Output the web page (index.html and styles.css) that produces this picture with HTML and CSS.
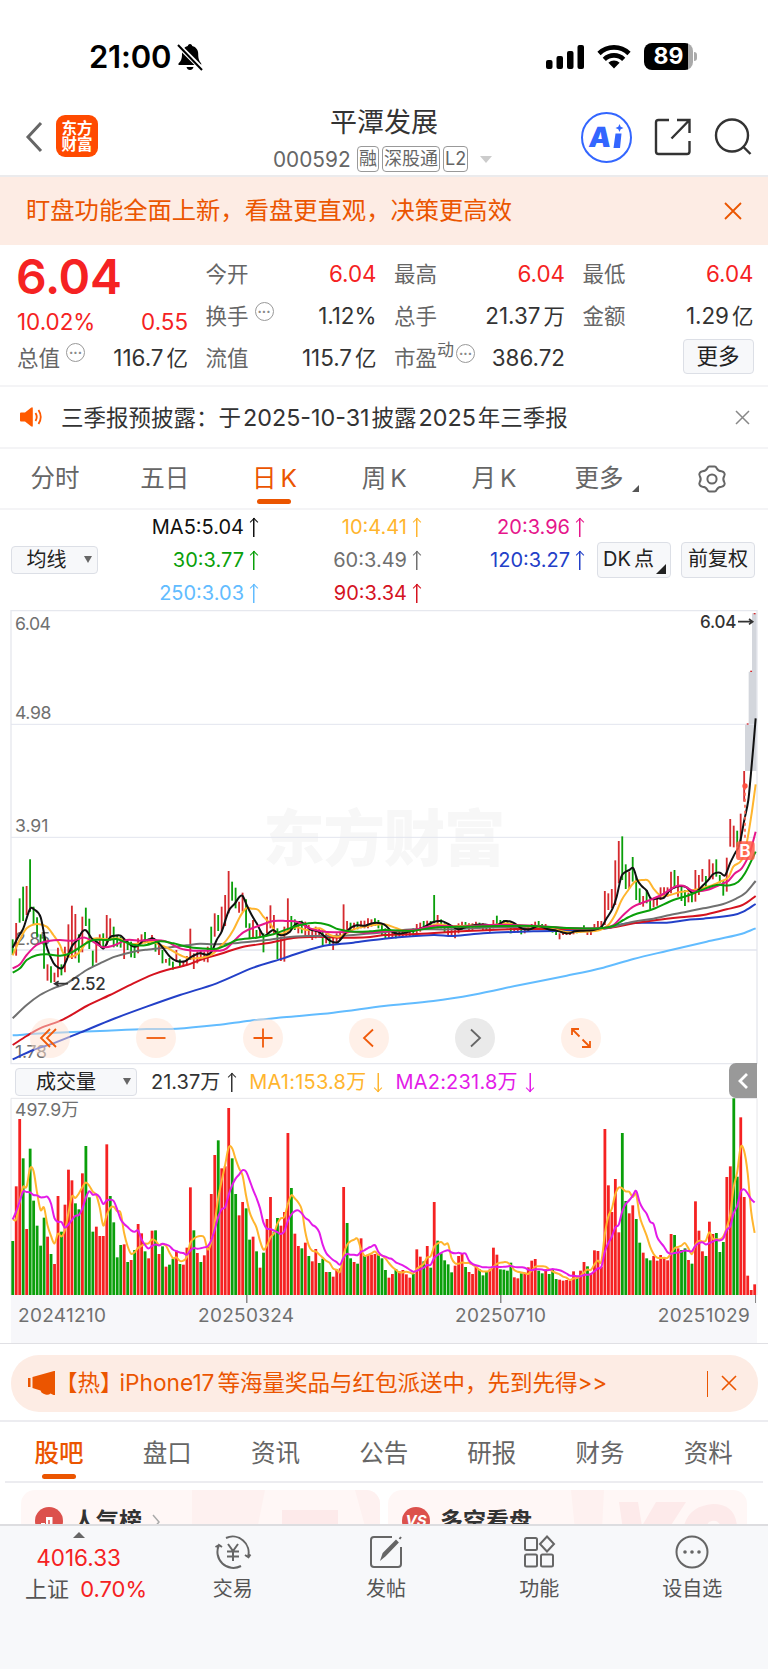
FILE: index.html
```html
<!DOCTYPE html>
<html lang="zh-CN">
<head>
  <meta charset="utf-8">
  <title>平潭发展 000592</title>
  <meta name="viewport" content="width=device-width, initial-scale=1">
  <link rel="stylesheet" href="styles.css">
</head>
<body>
  <div class="statusbar">
    <span class="time">21:00</span>
    <svg class="bell" width="26" height="28" viewBox="0 0 26 28">
      <path d="M13 1c1.500 0 2 1 2.200 2 4 1 6 4 6 8 0 5 1 7 3 9.500v1.500H1.500v-1.500C4 18 5 16 5 11c0-4 2-7 5.800-8 .2-1 .7-2 2.200-2zM9.500 24h7c-.5 2-1.700 3-3.500 3s-3-1-3.500-3z"/>
      <path d="M0 1l25 25" stroke="#fff" stroke-width="5"/>
      <path d="M1 2l24 25" stroke="#000" stroke-width="2"/>
    </svg>
    <div class="status-right">
      <svg width="39" height="24" viewBox="0 0 39 24">
        <rect x="0" y="15" width="6.500" height="9" rx="2"/>
        <rect x="10.500" y="11" width="6.500" height="13" rx="2"/>
        <rect x="21" y="6" width="6.500" height="18" rx="2"/>
        <rect x="31.500" y="0" width="6.500" height="24" rx="2"/>
      </svg>
      <svg class="wifi" width="34" height="25" viewBox="0 0 34 25">
        <g fill="none" stroke="#000" stroke-width="4.600">
          <path d="M2 9.500a21.500 21.500 0 0 1 30 0"/>
          <path d="M7.300 15.300a14 14 0 0 1 19.400 0"/>
        </g>
        <path d="M17 24.500l-5.600-5.800a8.200 8.200 0 0 1 11.200 0z"/>
      </svg>
      <div class="battery"><span>89</span></div>
      <i class="nub"></i>
    </div>
  </div>

  <div class="header">
    <div class="header-left">
      <svg width="18" height="32" viewBox="0 0 18 32"><path d="M16 2L3 16l13 14" fill="none" stroke="#666" stroke-width="3"/></svg>
      <div class="logo">东方<br>财富</div>
    </div>
    <div class="title">
      <h1>平潭发展</h1>
      <div class="code">
        <span class="num">000592</span><span class="tag">融</span><span class="tag">深股通</span><span class="tag">L2</span><i class="caret"></i>
      </div>
    </div>
    <div class="header-right">
      <div class="ai"><span>A</span><svg width="12" height="26" viewBox="0 0 12 26"><path d="M7.500 0l1.200 2.800L11.500 4 8.700 5.200 7.500 8 6.300 5.200 3.500 4l2.800-1.200zM3.500 9.500h6L8 24H1.500z" fill="#36f"/></svg></div>
      <svg class="share" width="38" height="38" viewBox="0 0 38 38" fill="none" stroke="#333" stroke-width="2.400">
        <path d="M15 2H4.500Q2 2 2 4.500v29Q2 36 4.500 36h28.500q2.500 0 2.500-2.500V23M23 2h12.500v13M35 2.500L17.500 20.500"/>
      </svg>
      <svg width="38" height="38" viewBox="0 0 38 38" fill="none" stroke="#333" stroke-width="2.400">
        <circle cx="18" cy="17.500" r="16"/><path d="M29 28.500l7.500 7.500"/>
      </svg>
    </div>
  </div>

  <div class="banner">
    <span>盯盘功能全面上新，看盘更直观，决策更高效</span>
    <svg width="18" height="18" viewBox="0 0 18 18"><path d="M1 1l16 16M17 1L1 17" stroke="#eb5500" stroke-width="1.800"/></svg>
  </div>

  <div class="quote">
    <div class="quote-col first">
      <div class="price">6.04</div>
      <div class="row red"><span>10.02%</span><span>0.55</span></div>
      <div class="row last"><label>总值<i class="dots">···</i></label><span>116.7<b>亿</b></span></div>
    </div>
    <div class="quote-col">
      <div class="row red"><label>今开</label><span>6.04</span></div>
      <div class="row"><label>换手<i class="dots">···</i></label><span>1.12%</span></div>
      <div class="row"><label>流值</label><span>115.7<b>亿</b></span></div>
    </div>
    <div class="quote-col">
      <div class="row red"><label>最高</label><span>6.04</span></div>
      <div class="row"><label>总手</label><span>21.37<b>万</b></span></div>
      <div class="row"><label>市盈<sup>动</sup><i class="dots">···</i></label><span>386.72</span></div>
    </div>
    <div class="quote-col">
      <div class="row red"><label>最低</label><span>6.04</span></div>
      <div class="row"><label>金额</label><span>1.29<b>亿</b></span></div>
      <div class="row end"><a class="btn more">更多</a></div>
    </div>
  </div>

  <div class="notice">
    <svg width="24" height="20" viewBox="0 0 24 20">
      <path d="M1 6.500Q1 5.500 2 5.500h4L12 .8q1.800-1.200 1.800.8v16.800q0 2-1.800.8L6 14.500H2q-1 0-1-1z" fill="#ff5a00"/>
      <path d="M16.500 6q2.500 4 0 8M19.500 3q4.500 7 0 14" fill="none" stroke="#ff5a00" stroke-width="1.800"/>
    </svg>
    <span>三季报预披露：于<em>2025-10-31</em>披露<em>2025</em>年三季报</span>
    <svg class="close" width="15" height="15" viewBox="0 0 15 15"><path d="M1 1l13 13M14 1L1 14" stroke="#888" stroke-width="1.500"/></svg>
  </div>

  <div class="period">
    <span>分时</span>
    <span>五日</span>
    <span class="active">日<em>K</em></span>
    <span>周<em>K</em></span>
    <span>月<em>K</em></span>
    <span class="has-more">更多</span>
    <span class="gear"><svg width="30" height="28" viewBox="0 0 30 28" fill="none" stroke="#666" stroke-width="2">
      <path d="M10.500 3Q11 1.500 12.500 1.500h5Q19 1.500 19.500 3q1.500 3 5 3.200 2 .3 2.800 1.800.8 1.300 0 2.700-2 3.300 0 6.600.8 1.400 0 2.700-.8 1.500-2.800 1.800-3.500.2-5 3.200-.5 1.500-2 1.500h-5q-1.500 0-2-1.500-1.500-3-5-3.200-2-.3-2.800-1.800-.8-1.300 0-2.700 2-3.300 0-6.600-.8-1.400 0-2.700.8-1.500 2.800-1.800 3.500-.2 5-3.200z"/>
      <circle cx="15" cy="14" r="4.600"/>
    </svg></span>
  </div>

  <div class="ma">
    <a class="btn select">均线</a>
    <div class="ma-grid">
      <span class="c-5">MA5:5.04<i class="up"></i></span>
      <span class="c-10">10:4.41<i class="up"></i></span>
      <span class="c-20">20:3.96<i class="up"></i></span>
      <span class="c-30">30:3.77<i class="up"></i></span>
      <span class="c-60">60:3.49<i class="up"></i></span>
      <span class="c-120">120:3.27<i class="up"></i></span>
      <span class="c-250">250:3.03<i class="up"></i></span>
      <span class="c-90">90:3.34<i class="up"></i></span>
    </div>
    <a class="btn dk">DK<b>点</b></a>
    <a class="btn fq">前复权</a>
  </div>

  <div class="chart">
    <svg id="kline" width="768" height="457" viewBox="0 27 2304 1371"></svg>
    <div class="controls">
      <span><svg viewBox="0 0 40 40"><path d="M20 11l-9 9 9 9M26 11l-9 9 9 9"/></svg></span>
      <span><svg viewBox="0 0 40 40"><path d="M10.500 20h19"/></svg></span>
      <span><svg viewBox="0 0 40 40"><path d="M10.500 20h19M20 10.500v19"/></svg></span>
      <span><svg viewBox="0 0 40 40"><path d="M24 11.500l-9 8.500 9 8.500"/></svg></span>
      <span class="off"><svg viewBox="0 0 40 40"><path d="M16 11.500l9 8.500-9 8.500"/></svg></span>
      <span><svg viewBox="0 0 40 40"><path d="M11 17v-6h7M11.500 11.500l7 7M29 23v6h-8M28.500 28.500l-7-7"/></svg></span>
    </div>
  </div>

  <div class="vol-head">
    <a class="btn select wide">成交量</a>
    <span class="v1">21.37万<i class="up"></i></span>
    <span class="v2">MA1:153.8万<i class="up down"></i></span>
    <span class="v3">MA2:231.8万<i class="up down"></i></span>
    <a class="fold"><svg width="12" height="18" viewBox="0 0 12 18"><path d="M10 2L3 9l7 7" fill="none" stroke="#fff" stroke-width="2.800"/></svg></a>
  </div>
  <svg id="volume" width="768" height="198" viewBox="0 111 2304 594"></svg>
  <div class="dates">
    <span>20241210</span><span>20250324</span><span>20250710</span><span>20251029</span>
  </div>

  <div class="hot-wrap">
    <div class="hot">
      <svg width="28" height="24" viewBox="0 0 28 24" fill="#eb5500"><path d="M0 7h2.500v9H0zM4.500 6L26 0h1v24h-1.500l-3-1.500q-2 2-5 1l-2-.7q-2.500-1-3-3.300L4.500 17z"/></svg>
      <span>【热】<em>iPhone17</em>等海量奖品与红包派送中，先到先得&gt;&gt;</span>
      <i class="bar"></i>
      <svg width="16" height="16" viewBox="0 0 16 16"><path d="M1 1l14 14M15 1L1 15" stroke="#eb5500" stroke-width="1.600"/></svg>
    </div>
  </div>

  <div class="tabs">
    <span class="active">股吧</span><span>盘口</span><span>资讯</span><span>公告</span><span>研报</span><span>财务</span><span>资料</span>
  </div>

  <div class="cards">
    <div class="card">
      <svg class="deco" width="210" height="40" viewBox="0 0 210 40"><path d="M22 0h73l-8 40H22z" fill="#fef1f0"/><path d="M112 20h56v20h-56z" fill="#fdeaea"/><path d="M185 0h25v40h-14z" fill="#fef1f0"/></svg>
      <svg class="badge" width="28" height="28" viewBox="0 0 28 28"><circle cx="14" cy="14" r="14" fill="#dc514c"/><path d="M6 24v-8h4v8zM11 24V10h6.500v14zM19 24v-6h3.500v6z" fill="#fff"/><path d="M14 13v11" stroke="#dc514c" stroke-width="1.500"/></svg>
      <span>人气榜</span>
      <svg class="arrow" width="9" height="16" viewBox="0 0 9 16"><path d="M1 1l6 7-6 7" fill="none" stroke="#aaa" stroke-width="1.500"/></svg>
    </div>
    <div class="card">
      <svg class="deco" width="180" height="40" viewBox="0 0 180 40"><path d="M4 0h33l-2 40H8z" fill="#fef1f0"/><path d="M52 12h19l4 24 14-24h30l-18 28H56zM116 40q4-24 30-26 22 0 24 22h-16q-4-8-12-4l-6 8z" fill="#fdeaea"/></svg>
      <div class="badge vs">VS</div>
      <span>多空看盘</span>
    </div>
  </div>

  <div class="footer">
    <div class="index">
      <i class="tri"></i>
      <div class="red">4016.33</div>
      <div class="name">上证<em class="red">0.70%</em></div>
    </div>
    <div class="item">
      <svg width="38" height="34" viewBox="0 0 38 34" fill="none" stroke="#666" stroke-width="2">
        <path d="M12 3A16 16 0 0 1 34 22l-3-2M34 23l2.500-3.500M27 31A16 16 0 0 1 5 10l3 2M5 10L1.500 12M14 9l5 7 5-7M13 16.500h12M13 21.500h12M19 16v10"/>
      </svg>
      <span>交易</span>
    </div>
    <div class="item">
      <svg width="34" height="34" viewBox="0 0 34 34" fill="none" stroke="#666" stroke-width="2">
        <path d="M23 2H5Q2 2 2 5v24q0 3 3 3h24q3 0 3-3V12"/><path d="M13 23l1.500-4.500L27 6l1.500 1.500L16 20.500zM30.500 4l1.500-2" fill="#666"/>
      </svg>
      <span>发帖</span>
    </div>
    <div class="item">
      <svg width="34" height="34" viewBox="0 0 34 34" fill="none" stroke="#666" stroke-width="2">
        <rect x="3" y="3" width="12" height="12" rx="1.500"/><path d="M25 1.500L32 9l-7 7.500L18 9z"/><rect x="3" y="19.500" width="12" height="12" rx="1.500"/><rect x="19" y="19.500" width="12" height="12" rx="1.500"/>
      </svg>
      <span>功能</span>
    </div>
    <div class="item">
      <svg width="34" height="34" viewBox="0 0 34 34" fill="none" stroke="#666" stroke-width="2">
        <circle cx="17" cy="17" r="15.500"/><g fill="#666" stroke="none"><circle cx="10" cy="17" r="1.800"/><circle cx="17" cy="17" r="1.800"/><circle cx="24" cy="17" r="1.800"/></g>
      </svg>
      <span>设自选</span>
    </div>
  </div>
<script src="chart.js"></script>
</body>
</html>
```
FILE: styles.css
```css
html {
  font-family: Inter, "Noto Sans CJK SC", sans-serif;
  color: #333;
}
body {
  margin: 0;
  width: 768px;
  height: 1669px;
  overflow: hidden;
  background-color: #fff;
}
i, em {
  font-style: normal;
}
svg {
  display: block;
  flex: none;
}
.red, .red span {
  color: #f52222;
}

/* status bar */
.statusbar {
  height: 97px;
  display: flex;
  padding: 0 71px 0 89px;
  color: #000;
}
.time {
  font-size: 31px;
  font-weight: 600;
  line-height: 36px;
  margin-top: 39px;
  width: 82px;
  letter-spacing: -0.200px;
}
.bell {
  margin: 43px 0 0 6px;
}
.status-right {
  margin: 43px 0 0 auto;
  display: flex;
  height: 27px;
  align-items: center;
}
.wifi {
  margin: 0 13px 0 12px;
}
.battery {
  width: 49px;
  height: 27px;
  border-radius: 8px;
  background: linear-gradient(90deg, #000 44px, #aaa 44px);
  color: #fff;
  font-size: 23px;
  font-weight: 700;
  line-height: 27px;
  text-align: center;
}
.nub {
  width: 3px;
  height: 9px;
  margin-left: 1px;
  border-radius: 0 4px 4px 0;
  background-color: #aaa;
}

/* header */
.header {
  height: 78px;
  display: flex;
  border-bottom: 2px solid #ebebed;
}
.header-left {
  display: flex;
  width: 244px;
  padding: 18px 0 0 25px;
  align-items: flex-start;
}
.header-left svg {
  margin-top: 6px;
}
.logo {
  width: 42px;
  height: 36px;
  padding-top: 6px;
  margin-left: 13px;
  border-radius: 9px;
  background-color: #ff4a00;
  color: #fff;
  font-size: 15.500px;
  line-height: 16px;
  font-weight: 700;
  text-align: center;
}
.title {
  width: 230px;
}
h1 {
  margin: 10px 0 0;
  font-size: 27px;
  line-height: 32px;
  font-weight: 400;
  text-align: center;
}
.code {
  display: flex;
  align-items: center;
  height: 28px;
  margin-top: 6px;
  padding-left: 4px;
  color: #666;
}
.num {
  font-size: 20.800px;
  width: 80px;
  margin-right: 4px;
}
.tag {
  font-size: 18px;
  line-height: 24px;
  padding: 0 1px;
  margin-right: 3px;
  border: 1px solid #999;
  border-radius: 4px;
}
.caret {
  margin-left: 9px;
  border: 6px solid transparent;
  border-top: 7px solid #ccc;
  border-bottom: 0;
}
.header-right {
  margin-left: auto;
  display: flex;
  padding: 15px 16px 0 0;
}
.ai {
  box-sizing: border-box;
  display: flex;
  justify-content: center;
  width: 51px;
  height: 51px;
  border: 2.500px solid #36f;
  border-radius: 50%;
  color: #36f;
  font-size: 28px;
  line-height: 47px;
  font-weight: 900;
}
.ai span {
  transform: skewX(-6deg);
}
.ai svg {
  margin-top: 10px;
}
.share {
  margin: 6px 22px 0;
}
.share + svg {
  margin-top: 6px;
}

.banner {
  height: 68px;
  display: flex;
  align-items: center;
  justify-content: space-between;
  padding: 0 26px 0 26px;
  background-color: #fdece4;
  color: #eb5500;
  font-size: 24.300px;
}
.banner span {
  margin-top: -5px;
}

/* quote */
.quote {
  height: 142px;
  box-sizing: border-box;
  display: flex;
  gap: 17.500px;
  padding: 8px 15px 0 17px;
  border-bottom: 2px solid #f4f4f6;
  font-size: 21.500px;
}
.quote-col {
  width: 171px;
  flex: none;
}
.price {
  height: 48px;
  color: #f52222;
  font-size: 48px;
  line-height: 48px;
  font-weight: 600;
  letter-spacing: -0.300px;
  margin-left: -1px;
}
.row {
  display: flex;
  justify-content: space-between;
  height: 42px;
  line-height: 42px;
  white-space: nowrap;
}
.row > span {
  font-size: 22.400px;
}
.row b {
  font-size: 21.500px;
}
.row b, .dk b {
  font-weight: 400;
  margin-left: 3px;
}
.first .row {
  height: 40px;
}
.first .last {
  line-height: 34px;
}
.row label {
  display: flex;
  color: #666;
}
.row sup {
  font-size: 17px;
  line-height: 26px;
}
.dots {
  box-sizing: border-box;
  width: 19px;
  height: 19px;
  margin: 7px 0 0 6px;
  border: 1.500px solid #999;
  border-radius: 50%;
  font-size: 13px;
  line-height: 16px;
  font-weight: 700;
  color: #888;
  text-align: center;
}
.first .dots {
  margin-top: 2px;
}
.row sup + .dots {
  margin-left: 2px;
}
.end {
  justify-content: flex-end;
}
.btn {
  box-sizing: border-box;
  border: 1px solid #dcdfe6;
  border-radius: 4px;
  background-color: #f7f8fa;
  color: #222;
  text-align: center;
}
.more {
  width: 71px;
  height: 35px;
  margin-top: 2px;
  line-height: 33px;
}

.notice {
  height: 62px;
  box-sizing: border-box;
  display: flex;
  align-items: center;
  padding: 0 18px 0 19px;
  border-bottom: 2px solid #f4f4f6;
  font-size: 22.500px;
}
.notice span {
  margin: -2px 0 0 18px;
}
.notice em {
  margin: 0 2px;
  font-size: 23.300px;
}
.notice .close {
  margin-left: auto;
}

.period {
  height: 61px;
  box-sizing: border-box;
  display: flex;
  border-bottom: 2px solid #f4f4f6;
  color: #666;
  font-size: 24.500px;
  line-height: 59px;
}
.period span {
  position: relative;
  flex: none;
  width: 109.800px;
  text-align: center;
}
.period em {
  margin-left: 4px;
}
.period .has-more {
  width: 100px;
}
.has-more::after {
  content: "";
  position: absolute;
  right: 10px;
  top: 36px;
  border-left: 7px solid transparent;
  border-bottom: 7px solid #555;
}
.period .gear {
  display: flex;
  width: 119px;
  padding-right: 0;
  margin-left: 4px;
  align-items: center;
  justify-content: center;
}
.period .active, .tabs .active {
  color: #eb5500;
}
.active::after {
  content: "";
  position: absolute;
  left: 50%;
  bottom: 4px;
  width: 34px;
  height: 5px;
  margin-left: -17px;
  border-radius: 3px;
  background-color: #eb5500;
}

/* moving averages */
.ma {
  height: 98px;
  display: flex;
  align-items: center;
  padding: 1px 13px 0 11px;
  font-size: 20px;
}
.select {
  position: relative;
  width: 87px;
  height: 28px;
  padding-right: 16px;
  font-size: 20px;
  line-height: 26px;
}
.select::after {
  content: "";
  position: absolute;
  right: 5px;
  top: 9px;
  border: 4px solid transparent;
  border-top: 7px solid #666;
  border-bottom: 0;
}
.ma-grid {
  flex: 1;
  display: grid;
  grid-template-columns: 161px 163px 163px;
  line-height: 33px;
}
.ma-grid span {
  text-align: right;
}
.up {
  display: inline-block;
  position: relative;
  width: 10px;
  height: 19px;
  margin-left: 5px;
  vertical-align: -3px;
  background: linear-gradient(currentColor, currentColor) center / 1.500px 100% no-repeat;
}
.up::before {
  content: "";
  position: absolute;
  left: 2px;
  top: 1px;
  width: 5px;
  height: 5px;
  border-left: 1.500px solid;
  border-top: 1.500px solid;
  transform: rotate(45deg);
}
.down {
  transform: rotate(180deg);
}
.c-5 { color: #111; }
.c-10 { color: #ffb52e; }
.c-20 { color: #e6168b; }
.c-30 { color: #0a9f0a; }
.c-60 { color: #707070; }
.c-120 { color: #2340c8; }
.c-250 { color: #62bcff; }
.c-90 { color: #d5131f; }
.dk, .fq {
  height: 36px;
  width: 74px;
  line-height: 33px;
  font-size: 20px;
}
.dk {
  position: relative;
  margin-right: 10px;
  padding-right: 11px;
}
.dk::after {
  content: "";
  position: absolute;
  right: 4px;
  bottom: 3px;
  border-left: 10px solid transparent;
  border-bottom: 10px solid #222;
}

/* chart */
.chart {
  position: relative;
}
.controls {
  position: absolute;
  left: 30px;
  bottom: 8px;
  display: flex;
  gap: 66.300px;
}
.controls span {
  width: 40px;
  height: 40px;
  border-radius: 50%;
  background-color: rgba(255, 225, 210, .5);
}
.controls path {
  fill: none;
  stroke: #f05a0a;
  stroke-width: 1.800;
}
.controls .off {
  background-color: #eaeaea;
}
.controls .off path {
  stroke: #666;
}
.axis {
  font-size: 53px;
  fill: #707070;
}
.mark {
  font-size: 51px;
  font-weight: 500;
  fill: #333;
}
.watermark {
  font-size: 184px;
  font-weight: 900;
  fill: #f7f7f7;
}
.vol-head {
  position: relative;
  height: 31px;
  display: flex;
  align-items: center;
  padding-left: 15px;
  font-size: 20px;
}
.wide {
  width: 122px;
  padding-right: 20px;
  margin-right: 14px;
}
.vol-head span {
  white-space: nowrap;
  margin: -2px 12px 0 0;
}
.vol-head .up {
  margin-left: 7px;
}
.v2 { color: #ffb52e; }
.v3 { color: #e31be8; }
.v3, .v2 { letter-spacing: 0.220px; }
.fold {
  position: absolute;
  left: 729px;
  top: -3px;
  width: 28px;
  height: 35px;
  display: flex;
  align-items: center;
  justify-content: center;
  border-radius: 7px 0 0 7px;
  background-color: #999;
}
.dates {
  height: 48px;
  width: 746px;
  box-sizing: border-box;
  margin-left: 11px;
  display: flex;
  padding: 0 7px;
  background: #f7f7fa;
  color: #707070;
  font-size: 19px;
  letter-spacing: 0.300px;
  line-height: 41px;
  position: relative;
}
.dates::before {
  content: "";
  position: absolute;
  left: 235px;
  top: 0;
  width: 510px;
  height: 8px;
  background: linear-gradient(#888, #888) 0 0 / 1.500px 8px no-repeat, linear-gradient(#888, #888) 254px 0 / 1.500px 8px no-repeat, linear-gradient(#888, #888) 100% 0 / 1.500px 8px no-repeat;
}
.dates span:nth-child(1) { width: 180px; }
.dates span:nth-child(2) { width: 257px; }
.dates span:nth-child(4) { margin-left: auto; }

.hot-wrap {
  height: 79px;
  box-sizing: border-box;
  padding: 11px 10px 0 11px;
  border-top: 1px solid #e0e0e4;
  border-bottom: 2px solid #ececf0;
}
.hot {
  height: 57px;
  display: flex;
  align-items: center;
  padding: 0 21px 0 17px;
  border-radius: 28px;
  background-color: #fdece4;
  color: #eb5500;
  font-size: 22.500px;
}
.hot svg {
  margin-top: -2px;
}
.hot span {
  margin: -5px 0 0 -1px;
}
.hot em {
  margin: 0 3px 0 -3px;
  font-size: 22.700px;
}
.bar {
  width: 1.500px;
  height: 26px;
  margin: 0 13px 0 auto;
  background-color: #eb5500;
}

.tabs {
  height: 61px;
  display: flex;
  box-sizing: border-box;
  margin: 0 5px;
  border-bottom: 2px solid #ececf0;
  color: #666;
  font-size: 24.500px;
  line-height: 62px;
}
.tabs span {
  position: relative;
  width: 108.200px;
  text-align: center;
}
.tabs .active {
  font-weight: 500;
}
.tabs .active::after {
  bottom: 2px;
}

.cards {
  height: 41px;
  box-sizing: border-box;
  display: flex;
  gap: 8px;
  padding: 7px 21px 0;
  overflow: hidden;
}
.card {
  position: relative;
  width: 359px;
  height: 70px;
  box-sizing: border-box;
  display: flex;
  padding: 17px 14px;
  border-radius: 14px;
  background-color: #fff7f6;
  overflow: hidden;
  font-size: 23px;
  line-height: 28px;
  font-weight: 700;
}
.card span {
  position: relative;
  margin-left: 10px;
}
.badge {
  position: relative;
}
.deco {
  position: absolute;
  right: 0;
  top: 0;
}
.arrow {
  margin: 7px 0 0 10px;
}
.vs {
  width: 28px;
  height: 28px;
  border-radius: 50%;
  background-color: #dc514c;
  color: #fff;
  font-size: 15px;
  font-style: italic;
  text-align: center;
}

/* bottom bar */
.footer {
  position: relative;
  height: 145px;
  box-sizing: border-box;
  display: grid;
  grid-template-columns: repeat(5, 153.200px);
  padding-left: 3px;
  border-top: 2px solid #dddde0;
  background-color: #f7f8fa;
  color: #555;
  font-size: 20px;
  text-align: center;
}
.index {
  padding-top: 6px;
  font-size: 22.500px;
  line-height: 30px;
  white-space: nowrap;
  padding-right: 2px;
}
.index .red {
  height: 31px;
}
.index .name {
  padding-left: 15px;
  font-size: 22px;
}
.index em {
  margin-left: 11px;
}
.tri {
  display: block;
  width: 0;
  margin: 0 auto 5px;
  border: 6px solid transparent;
  border-bottom: 6px solid #666;
  border-top: 0;
}
.item {
  display: flex;
  flex-direction: column;
  align-items: center;
  padding-top: 9px;
}
.item span {
  margin-top: 6px;
  line-height: 28px;
}
```
FILE: chart.js
```js
var STEP = 10.45, X0 = 38;
var RED = '#f52222', GREEN = '#0a9f0a';

// top of every volume bar, r = up day, g = down day
var volume = 'g543 r379 r177 g295 r507 g266 g422 g497 g557 g473 r530 g582 r612 r408 g515 r434 r329 r361 g430 g448 r340 g258 g412 g515 r500 r528 r528 r253 g408 g487 g592 g555 r553 g606 r600 g570 r492 r520 g574 r595 r512 g511 r582 g559 r620 g614 g596 r572 g612 r614 r563 r382 g511 r579 g606 r586 r560 r402 r285 g241 r325 r319 r144 g295 g402 r466 r426 g445 g539 r530 g574 r623 g578 r477 r411 g515 g474 r497 r456 r219 g384 r521 r558 g565 r548 g588 r604 r567 g609 g596 r636 g636 r650 r628 r625 r381 g489 g595 r606 g611 r535 g588 r584 r584 r582 g585 g595 g630 r653 r642 g627 r634 r630 r643 r653 g642 r568 r590 g604 r558 g623 r426 g542 g580 g601 g613 g637 r617 r588 r582 g621 r636 r642 r620 g628 g646 g636 r628 r563 r584 g628 g629 g632 g608 r652 r655 g640 r640 r622 r602 r597 g632 g640 r628 g642 g628 g657 r659 r662 r660 r662 r634 g652 r632 r606 g619 r640 r571 r573 r620 r207 r376 r456 r357 r517 g219 g423 r460 r436 g477 g548 r578 g595 g601 r588 r602 r585 r592 r601 r522 g525 r565 g570 g565 r600 g611 r424 r512 r574 g588 r485 r522 g519 g576 g546 r351 r319 g115 g350 r172 r411 r647 r690 r673'.split(' ');

// high-low of every day
var candles = 'g1018-1065 r969-1067 g895-968 g860-963 r858-945 g778-935 g920-973 g952-1010 g1003-1030 g1005-1106 r1093-1142 g1099-1148 r1118-1146 r1043-1132 g1093-1126 r1040-1117 r973-1068 r917-1077 r942-1075 g1003-1088 r950-1057 g923-978 g956-1047 g1052-1098 r1026-1088 r1003-1040 g1000-1047 r945-1035 r955-1022 g980-1042 g1005-1040 g1010-1043 r1025-1077 g1020-1050 g1025-1072 g1040-1074 r1015-1060 r1003-1033 g996-1030 g1015-1035 r1005-1030 g1020-1055 r1035-1065 g1050-1090 r1077-1088 g1074-1097 g1085-1109 r1050-1085 g1078-1098 r1083-1100 r1068-1095 r986-1080 r1060-1107 r1055-1090 r1052-1080 r1055-1085 r1040-1087 g980-1060 r940-1010 g945-993 r920-995 r885-978 r813-940 g845-902 g863-925 r905-938 r878-935 g898-983 g970-1015 r960-1015 g990-1015 r990-1012 g1000-1057 r950-1000 r916-985 r945-1000 g985-1077 r1010-1083 r980-1085 r895-1000 g948-985 g958-990 r970-1000 g962-1000 r965-1010 r975-1010 r985-1020 r980-1015 r985-1010 g990-1037 r1000-1030 g1005-1035 r1010-1050 r1000-1030 r995-1020 r913-1010 r963-995 g968-990 r968-990 g965-988 r962-985 r962-985 r955-985 r958-980 g955-978 g960-985 g970-1005 g985-1015 r990-1017 r990-1012 g990-1015 r990-1010 r992-1010 r992-1010 r990-1008 g985-1010 r972-1005 r968-995 g963-990 r962-990 g963-985 g885-970 r945-985 g958-985 g970-998 r980-1005 r985-1010 r980-1015 r970-1000 r965-990 g966-985 r970-990 r970-990 r965-985 g968-986 r970-990 g975-992 r975-995 r960-985 g947-975 g960-982 g960-978 g962-985 g968-1000 r980-998 r984-998 g985-1003 r982-1000 r976-995 r972-990 r965-988 g963-985 g972-990 r972-990 g978-995 g978-998 g985-1005 r1000-1018 r990-1005 r990-1005 r988-1005 r985-1003 g988-1000 r984-998 g976-995 r985-1005 r985-1005 r972-996 r963-985 r963-985 r873-975 r880-930 r867-925 r781-915 r723-850 g709-840 g793-867 r815-865 g771-845 g828-900 g865-915 r888-920 g870-910 g895-928 r893-922 r890-917 r862-900 r862-895 r862-890 r815-880 g810-865 r828-890 g858-903 g870-918 r878-907 g875-907 r810-905 r825-885 r807-845 g828-860 r778-840 r790-838 g778-830 g825-850 g840-887 r773-875 r657-740 r677-742 g692-740 r641-740 r513-605 r370-374 r212-216 r39-43'.split(' ');

var lines = {
  '#62bcff': '38,1306 130,1300 300,1293 440,1287 530,1286 650,1275 750,1262 850,1252 1000,1238 1152,1218 1300,1203 1420,1184 1560,1155 1700,1127 1810,1103 1900,1077 2000,1053 2120,1025 2220,1003 2267,985',
  '#2340c8': '38,1378 100,1350 160,1330 240,1298 340,1257 440,1220 540,1185 650,1150 760,1103 850,1075 960,1040 1060,1028 1152,1016 1300,1005 1360,1008 1450,1000 1600,994 1750,992 1820,985 1870,972 1930,968 2000,968 2060,960 2110,956 2200,945 2230,935 2267,912',
  '#d5131f': '38,1335 80,1308 120,1285 190,1258 260,1218 330,1185 400,1150 460,1123 500,1110 560,1095 600,1080 660,1062 730,1040 800,1030 880,1014 950,1010 1020,1013 1100,1012 1152,1005 1250,1002 1400,993 1550,987 1700,987 1800,986 1850,980 1900,970 1970,960 2060,950 2110,945 2180,928 2220,918 2240,908 2267,888',
  '#707070': '38,1255 80,1215 120,1185 160,1165 200,1150 260,1110 300,1090 345,1070 400,1055 440,1049 500,1043 560,1036 600,1031 640,1033 700,1030 750,1025 800,1020 850,1013 920,1008 1000,1008 1060,1005 1152,997 1240,988 1350,988 1450,983 1600,980 1700,984 1800,985 1850,978 1900,965 1960,956 2010,945 2060,935 2110,925 2170,912 2210,895 2235,880 2267,843',
  '#ffb52e': '38,1066 60,1018 80,985 110,972 140,980 160,1005 180,1035 190,1060 210,1070 235,1060 250,1040 265,1022 290,1015 320,1018 345,1015 365,1018 390,1032 420,1030 455,1025 480,1035 505,1045 530,1060 560,1073 590,1075 620,1070 640,1060 660,1040 680,1020 700,990 720,950 738,925 755,926 775,930 790,950 810,970 830,1000 850,1000 870,988 890,982 920,990 960,985 990,1005 1015,1010 1040,1000 1060,988 1090,980 1152,973 1190,985 1220,993 1270,985 1310,973 1360,978 1420,976 1480,975 1520,970 1570,978 1640,982 1700,996 1760,995 1800,990 1825,975 1845,945 1865,900 1885,870 1905,845 1930,840 1945,842 1960,865 1980,885 2010,885 2040,876 2070,872 2100,866 2130,858 2160,845 2185,832 2200,800 2225,780 2240,730 2255,640 2267,553',
  '#111': '38,1043 55,1010 70,985 90,927 102,928 122,952 140,1040 160,1088 175,1103 188,1103 200,1080 215,1040 232,1020 247,995 258,991 275,1015 292,1027 309,1046 318,1035 330,1012 345,1007 362,1007 380,1025 402,1040 415,1036 430,1022 445,1020 457,1015 470,1023 490,1045 510,1070 530,1083 555,1084 575,1070 600,1060 620,1064 635,1055 650,1020 665,995 686,933 705,910 718,891 728,888 740,915 755,945 770,970 791,1007 805,1000 820,990 835,1003 850,1005 870,995 880,980 898,966 910,970 930,988 955,995 975,1010 990,1022 1012,1027 1030,1008 1050,985 1070,976 1095,977 1110,972 1128,968 1152,973 1180,998 1205,1000 1240,992 1270,982 1300,966 1324,963 1345,972 1375,988 1400,980 1430,974 1460,974 1490,976 1515,963 1540,968 1565,985 1590,988 1615,978 1645,988 1670,992 1690,998 1707,1000 1725,994 1750,992 1780,990 1805,980 1820,955 1838,925 1850,890 1864,830 1875,817 1888,810 1900,805 1912,840 1925,858 1940,872 1953,896 1975,895 1992,893 2010,870 2030,860 2045,858 2060,862 2078,880 2095,870 2110,855 2125,840 2140,822 2160,818 2175,826 2190,790 2205,760 2218,735 2233,660 2245,600 2252,530 2260,440 2267,355',
  '#e6168b': '38,1105 60,1093 80,1065 110,1035 150,1022 180,1020 220,1022 255,1013 290,1032 310,1042 345,1035 380,1020 420,1022 460,1020 500,1025 540,1045 580,1052 620,1052 660,1052 680,1045 700,1025 730,997 770,980 820,963 860,963 890,965 930,985 960,993 1000,997 1060,995 1100,998 1152,994 1240,990 1300,978 1380,980 1470,975 1540,975 1620,978 1700,985 1800,985 1840,975 1870,945 1900,920 1950,900 1990,882 2025,860 2050,857 2080,873 2120,870 2170,850 2185,843 2205,820 2225,805 2245,770 2255,740 2267,695',
  '#0a9f0a': '38,1118 60,1105 80,1080 110,1066 140,1063 180,1067 210,1060 250,1035 280,1020 320,1020 350,1017 380,1028 410,1036 440,1035 480,1024 520,1030 560,1040 600,1045 650,1046 680,1035 710,1020 770,1013 820,1003 860,988 900,975 945,968 985,975 1015,988 1060,995 1110,994 1152,990 1240,992 1300,983 1400,980 1500,978 1600,978 1700,984 1800,985 1840,978 1870,960 1900,945 1960,927 2020,900 2060,888 2110,868 2150,855 2190,856 2215,845 2235,820 2267,755'
};

function parse(str) {
  return str.split(' ').map(function (p) { return p.split(',').map(Number); });
}
// smooth path through the points
function curve(pts) {
  var d = 'M' + pts[0];
  for (var i = 0; i < pts.length - 1; i++) {
    var a = pts[i - 1] || pts[i], b = pts[i], c = pts[i + 1], e = pts[i + 2] || c;
    var w = (c[0] - b[0]) / 3;
    var s1 = (c[1] - a[1]) / (c[0] - a[0]);
    var s2 = (e[1] - b[1]) / (e[0] - b[0]);
    d += 'C' + (b[0] + w) + ',' + (b[1] + w * s1) + ' ' + (c[0] - w) + ',' + (c[1] - w * s2) + ' ' + c;
  }
  return d;
}
function stroke(d, color, width) {
  return '<path d="' + d + '" fill="none" stroke="' + color + '" stroke-width="' + width + '"/>';
}
function text(cls, x, y, w, s) {
  return '<text class="' + cls + '" x="' + x + '" y="' + y + '" textLength="' + w + '">' + s + '</text>';
}

function drawKline() {
  var out = text('watermark', 790, 784, 726, '东方财富');
  // gaps of the last three days
  out += '<path d="M2235 373H2246V215H2256V40H2271V513H2235z" fill="#d3d6dc"/>';
  out += stroke('M33 1391V32h2238v1359z', '#e6e8ee', 4);
  out += stroke('M33 373h2238M33 712h2238', '#e2e5ee', 3);
  out += stroke('M33 1050h2238', '#e2e5ee', 5);
  out += text('axis', 45, 90, 108, '6.04') + text('axis', 45, 357, 109, '4.98') +
    text('axis', 45, 696, 100, '3.91') + text('axis', 45, 1034, 106, '2.85') + text('axis', 45, 1374, 96, '1.78');
  candles.forEach(function (c, i) {
    var r = c.slice(1).split('-');
    out += stroke('M' + (X0 + i * STEP) + ' ' + r[0] + 'V' + r[1], c[0] === 'r' ? '#d52a2e' : GREEN, 5.5);
  });
  for (var color in lines) out += stroke(curve(parse(lines[color])), color, 6);
  out += text('mark', 211, 1170, 106, '2.52') + stroke('M166 1151h38M176 1144l-12 7 12 7', '#333', 5);
  out += text('mark', 2100, 84, 109, '6.04') + stroke('M2214 65h42M2247 57l11 8-11 8', '#333', 5);
  // buy point
  out += stroke('M2235 560V720', '#ff6a55', 5).replace('/>', ' stroke-dasharray="9 9"/>');
  out += '<circle cx="2235" cy="558" r="8" fill="#ff5040"/>';
  out += '<rect x="2208" y="724" width="56" height="56" rx="10" fill="#ff5a48" opacity=".85"/>';
  out += '<text x="2218" y="770" font-size="52" font-weight="600" fill="#fff">B</text>';
  document.getElementById('kline').innerHTML = out;
}

function average(n, start) {
  var tops = volume.map(function (v) { return +v.slice(1); });
  return tops.map(function (t, i) {
    if (i < n - 1) return [X0 + i * STEP, start[i]];
    var sum = 0;
    for (var k = 0; k < n; k++) sum += tops[i - k];
    return [X0 + i * STEP, sum / n];
  });
}
function drawVolume() {
  var out = stroke('M33 705V115h2238v590', '#e6e6ea', 3);
  volume.forEach(function (v, i) {
    var top = +v.slice(1);
    out += '<rect x="' + (X0 - 4 + i * STEP) + '" y="' + top + '" width="8.400" height="' + (705 - top) + '" fill="' + (v[0] === 'r' ? RED : GREEN) + '"/>';
  });
  out += stroke(curve(average(5, [477, 478, 425, 381])), '#ffb52e', 6);
  out += stroke(curve(average(10, [478, 455, 425, 395, 396, 397, 405, 406, 412])), '#e31be8', 6);
  out += text('axis', 45, 167, 192, '497.9万');
  document.getElementById('volume').innerHTML = out;
}
drawKline();
drawVolume();
```
